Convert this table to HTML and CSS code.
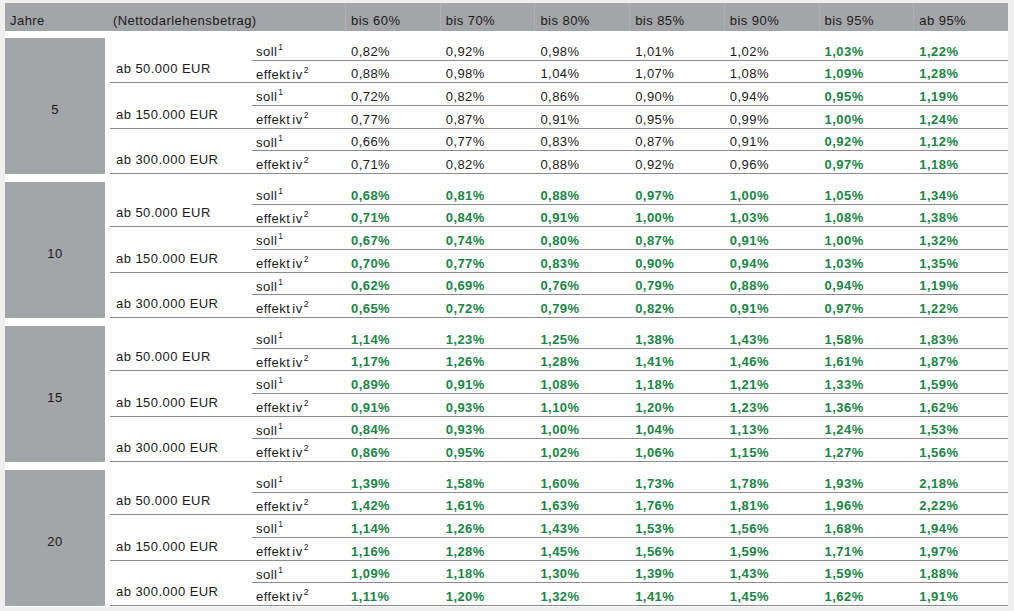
FILE: index.html
```html
<!DOCTYPE html>
<html lang="de">
<head>
<meta charset="utf-8">
<title>Konditionen</title>
<link rel="stylesheet" href="styles.css">
</head>
<body>
<div class="sheet">
  <div class="head">
    <div class="h-year">Jahre</div>
    <div class="h-amt">(Nettodarlehensbetrag)</div>
    <div class="h-val">bis 60%</div>
    <div class="h-val">bis 70%</div>
    <div class="h-val">bis 80%</div>
    <div class="h-val">bis 85%</div>
    <div class="h-val">bis 90%</div>
    <div class="h-val">bis 95%</div>
    <div class="h-val">ab 95%</div>
  </div>
  <div class="body">
    <div class="group">
      <div class="year">5</div>
      <div class="amt">ab 50.000 EUR</div>
      <div class="lbl">soll<sup>1</sup></div><div class="v">0,82%</div><div class="v">0,92%</div><div class="v">0,98%</div><div class="v">1,01%</div><div class="v">1,02%</div><div class="v g">1,03%</div><div class="v g">1,22%</div>
      <div class="lbl">effekt iv<sup>2</sup></div><div class="v">0,88%</div><div class="v">0,98%</div><div class="v">1,04%</div><div class="v">1,07%</div><div class="v">1,08%</div><div class="v g">1,09%</div><div class="v g">1,28%</div>
      <div class="amt">ab 150.000 EUR</div>
      <div class="lbl">soll<sup>1</sup></div><div class="v">0,72%</div><div class="v">0,82%</div><div class="v">0,86%</div><div class="v">0,90%</div><div class="v">0,94%</div><div class="v g">0,95%</div><div class="v g">1,19%</div>
      <div class="lbl">effekt iv<sup>2</sup></div><div class="v">0,77%</div><div class="v">0,87%</div><div class="v">0,91%</div><div class="v">0,95%</div><div class="v">0,99%</div><div class="v g">1,00%</div><div class="v g">1,24%</div>
      <div class="amt">ab 300.000 EUR</div>
      <div class="lbl">soll<sup>1</sup></div><div class="v">0,66%</div><div class="v">0,77%</div><div class="v">0,83%</div><div class="v">0,87%</div><div class="v">0,91%</div><div class="v g">0,92%</div><div class="v g">1,12%</div>
      <div class="lbl">effekt iv<sup>2</sup></div><div class="v">0,71%</div><div class="v">0,82%</div><div class="v">0,88%</div><div class="v">0,92%</div><div class="v">0,96%</div><div class="v g">0,97%</div><div class="v g">1,18%</div>
    </div>
    <div class="group green">
      <div class="year">10</div>
      <div class="amt">ab 50.000 EUR</div>
      <div class="lbl">soll<sup>1</sup></div><div class="v">0,68%</div><div class="v">0,81%</div><div class="v">0,88%</div><div class="v">0,97%</div><div class="v">1,00%</div><div class="v">1,05%</div><div class="v">1,34%</div>
      <div class="lbl">effekt iv<sup>2</sup></div><div class="v">0,71%</div><div class="v">0,84%</div><div class="v">0,91%</div><div class="v">1,00%</div><div class="v">1,03%</div><div class="v">1,08%</div><div class="v">1,38%</div>
      <div class="amt">ab 150.000 EUR</div>
      <div class="lbl">soll<sup>1</sup></div><div class="v">0,67%</div><div class="v">0,74%</div><div class="v">0,80%</div><div class="v">0,87%</div><div class="v">0,91%</div><div class="v">1,00%</div><div class="v">1,32%</div>
      <div class="lbl">effekt iv<sup>2</sup></div><div class="v">0,70%</div><div class="v">0,77%</div><div class="v">0,83%</div><div class="v">0,90%</div><div class="v">0,94%</div><div class="v">1,03%</div><div class="v">1,35%</div>
      <div class="amt">ab 300.000 EUR</div>
      <div class="lbl">soll<sup>1</sup></div><div class="v">0,62%</div><div class="v">0,69%</div><div class="v">0,76%</div><div class="v">0,79%</div><div class="v">0,88%</div><div class="v">0,94%</div><div class="v">1,19%</div>
      <div class="lbl">effekt iv<sup>2</sup></div><div class="v">0,65%</div><div class="v">0,72%</div><div class="v">0,79%</div><div class="v">0,82%</div><div class="v">0,91%</div><div class="v">0,97%</div><div class="v">1,22%</div>
    </div>
    <div class="group green">
      <div class="year">15</div>
      <div class="amt">ab 50.000 EUR</div>
      <div class="lbl">soll<sup>1</sup></div><div class="v">1,14%</div><div class="v">1,23%</div><div class="v">1,25%</div><div class="v">1,38%</div><div class="v">1,43%</div><div class="v">1,58%</div><div class="v">1,83%</div>
      <div class="lbl">effekt iv<sup>2</sup></div><div class="v">1,17%</div><div class="v">1,26%</div><div class="v">1,28%</div><div class="v">1,41%</div><div class="v">1,46%</div><div class="v">1,61%</div><div class="v">1,87%</div>
      <div class="amt">ab 150.000 EUR</div>
      <div class="lbl">soll<sup>1</sup></div><div class="v">0,89%</div><div class="v">0,91%</div><div class="v">1,08%</div><div class="v">1,18%</div><div class="v">1,21%</div><div class="v">1,33%</div><div class="v">1,59%</div>
      <div class="lbl">effekt iv<sup>2</sup></div><div class="v">0,91%</div><div class="v">0,93%</div><div class="v">1,10%</div><div class="v">1,20%</div><div class="v">1,23%</div><div class="v">1,36%</div><div class="v">1,62%</div>
      <div class="amt">ab 300.000 EUR</div>
      <div class="lbl">soll<sup>1</sup></div><div class="v">0,84%</div><div class="v">0,93%</div><div class="v">1,00%</div><div class="v">1,04%</div><div class="v">1,13%</div><div class="v">1,24%</div><div class="v">1,53%</div>
      <div class="lbl">effekt iv<sup>2</sup></div><div class="v">0,86%</div><div class="v">0,95%</div><div class="v">1,02%</div><div class="v">1,06%</div><div class="v">1,15%</div><div class="v">1,27%</div><div class="v">1,56%</div>
    </div>
    <div class="group green">
      <div class="year">20</div>
      <div class="amt">ab 50.000 EUR</div>
      <div class="lbl">soll<sup>1</sup></div><div class="v">1,39%</div><div class="v">1,58%</div><div class="v">1,60%</div><div class="v">1,73%</div><div class="v">1,78%</div><div class="v">1,93%</div><div class="v">2,18%</div>
      <div class="lbl">effekt iv<sup>2</sup></div><div class="v">1,42%</div><div class="v">1,61%</div><div class="v">1,63%</div><div class="v">1,76%</div><div class="v">1,81%</div><div class="v">1,96%</div><div class="v">2,22%</div>
      <div class="amt">ab 150.000 EUR</div>
      <div class="lbl">soll<sup>1</sup></div><div class="v">1,14%</div><div class="v">1,26%</div><div class="v">1,43%</div><div class="v">1,53%</div><div class="v">1,56%</div><div class="v">1,68%</div><div class="v">1,94%</div>
      <div class="lbl">effekt iv<sup>2</sup></div><div class="v">1,16%</div><div class="v">1,28%</div><div class="v">1,45%</div><div class="v">1,56%</div><div class="v">1,59%</div><div class="v">1,71%</div><div class="v">1,97%</div>
      <div class="amt">ab 300.000 EUR</div>
      <div class="lbl">soll<sup>1</sup></div><div class="v">1,09%</div><div class="v">1,18%</div><div class="v">1,30%</div><div class="v">1,39%</div><div class="v">1,43%</div><div class="v">1,59%</div><div class="v">1,88%</div>
      <div class="lbl">effekt iv<sup>2</sup></div><div class="v">1,11%</div><div class="v">1,20%</div><div class="v">1,32%</div><div class="v">1,41%</div><div class="v">1,45%</div><div class="v">1,62%</div><div class="v">1,91%</div>
    </div>
  </div>
</div>
</body>
</html>
```

FILE: styles.css
```css
html, body {
  margin: 0;
  padding: 0;
}

body {
  background: #efefef;
  font-family: "Liberation Sans", Arial, sans-serif;
  font-size: 13px;
  letter-spacing: 0.45px;
  color: #1a1a1a;
}

.sheet {
  margin: 3px 6px 0 5px;
}

.head {
  display: grid;
  grid-template-columns: 105px 235px repeat(7, 1fr);
  height: 28px;
  background: #a4a5a8;
}

.head > div {
  display: flex;
  align-items: flex-end;
  padding-bottom: 3px;
  line-height: 15px;
}

.h-year {
  padding-left: 5px;
}

.h-amt {
  padding-left: 3px;
}

.h-val {
  padding-left: 5px;
  border-left: 1px solid #afb0b3;
}

.body {
  background: #fff;
  padding: 7px 0 1px;
  display: flex;
  flex-direction: column;
  gap: 8px;
}

.group {
  display: grid;
  grid-template-columns: 100px 5px 142px 93px repeat(7, 1fr);
  grid-template-rows: repeat(6, 1fr);
  height: 136px;
}

.year {
  grid-column: 1;
  grid-row: 1 / span 6;
  background: #a4a5a8;
  display: flex;
  align-items: center;
  justify-content: center;
  padding-top: 8px;
}

.amt {
  grid-column: 3;
  grid-row: span 2;
  display: flex;
  align-items: flex-end;
  padding: 0 0 6px 6px;
  line-height: 15px;
  border-bottom: 1px solid #8c8c8c;
}

.lbl {
  grid-column: 4;
  display: block;
  box-sizing: border-box;
  padding: 6px 0 0 4px;
  line-height: 15px;
  white-space: nowrap;
  word-spacing: -2px;
  border-bottom: 1px solid #8c8c8c;
}

.v {
  display: flex;
  align-items: flex-end;
  padding: 0 0 1px 6px;
  line-height: 15px;
  border-bottom: 1px solid #8c8c8c;
}

.g,
.green .v {
  color: #188645;
  font-weight: bold;
}

sup {
  font-size: 8.5px;
  line-height: 0;
  vertical-align: 6px;
  letter-spacing: 0;
  margin-left: 1px;
}
```
